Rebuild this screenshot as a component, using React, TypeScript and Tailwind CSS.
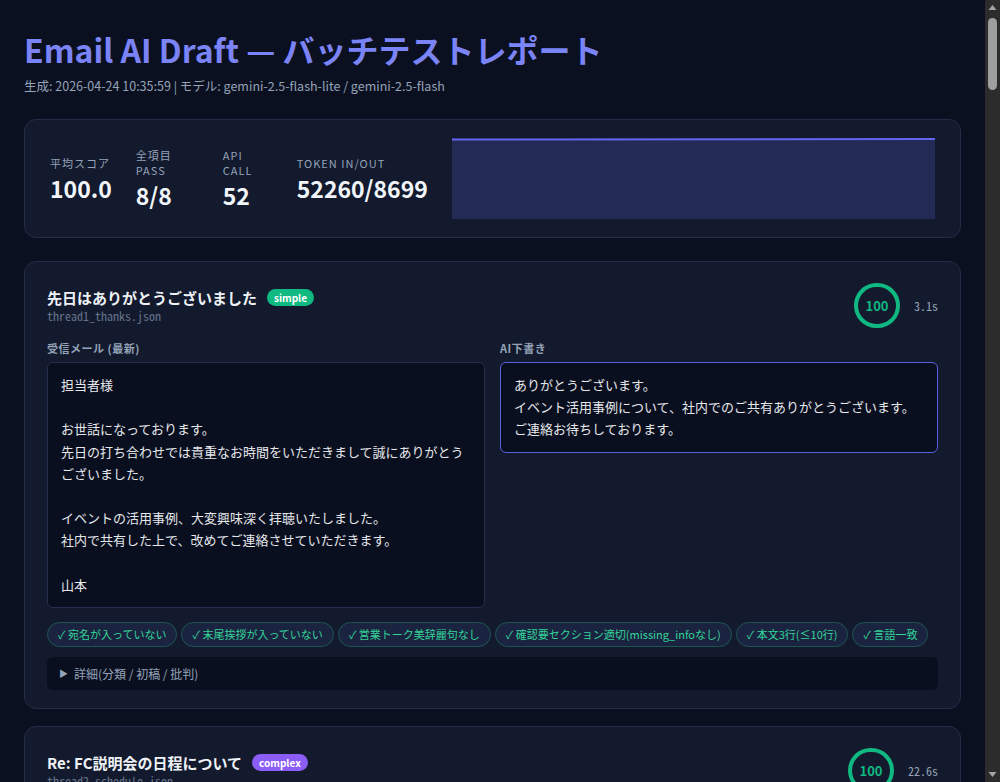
import React from 'react';

const sans = { fontFamily: '"Noto Sans CJK JP", "Noto Sans", sans-serif' };
const mono = { fontFamily: '"Noto Sans Mono CJK JP", "DejaVu Sans Mono", monospace' };

interface Case {
  title: string;
  kind: 'simple' | 'complex';
  file: string;
  score: number;
  time: string;
  inbound: string;
  draft: string;
  checks: string[];
}

const cases: Case[] = [
  {
    title: '先日はありがとうございました',
    kind: 'simple',
    file: 'thread1_thanks.json',
    score: 100,
    time: '3.1s',
    inbound:
      '担当者様\n\nお世話になっております。\n先日の打ち合わせでは貴重なお時間をいただきまして誠にありがとうございました。\n\nイベントの活用事例、大変興味深く拝聴いたしました。\n社内で共有した上で、改めてご連絡させていただきます。\n\n山本',
    draft: 'ありがとうございます。\nイベント活用事例について、社内でのご共有ありがとうございます。\nご連絡お待ちしております。',
    checks: ['宛名が入っていない', '末尾挨拶が入っていない', '営業トーク美辞麗句なし', '確認要セクション適切(missing_infoなし)', '本文3行(≤10行)', '言語一致'],
  },
  {
    title: 'Re: FC説明会の日程について',
    kind: 'complex',
    file: 'thread2_schedule.json',
    score: 100,
    time: '22.6s',
    inbound:
      'ご担当者様\n\nお世話になっております。\nFC説明会の日程につきまして、来週の火曜日または木曜日の午後で調整可能でしょうか。\n参加人数は3名を予定しております。\n\n何卒よろしくお願いいたします。\n\n佐藤',
    draft: 'ご連絡ありがとうございます。\n来週火曜日・木曜日の午後、いずれも調整可能です。\n参加人数3名にて承知いたしました。\n\n【確認要】\n・開始時刻のご希望',
    checks: ['宛名が入っていない', '末尾挨拶が入っていない', '営業トーク美辞麗句なし', '確認要セクション適切', '本文5行(≤10行)', '言語一致'],
  },
];

function Stat({ label, value, w }: { label: string; value: string; w?: string }) {
  return (
    <div className={`flex flex-col shrink-0 ${w ?? ''}`}>
      <div className="text-[11px] leading-[15px] tracking-[1px] text-[#94a3b8] mb-[3px]">{label}</div>
      <div className="text-[23px] leading-[28px] font-bold text-[#f1f5f9]">{value}</div>
    </div>
  );
}

function Sparkline() {
  return (
    <svg className="block w-full h-[81px]" viewBox="0 0 482 81" preserveAspectRatio="none">
      <rect x="0" y="1" width="482" height="80" fill="#232a55" />
      <line x1="0" y1="1.5" x2="482" y2="1" stroke="#6366f1" strokeWidth="2" />
    </svg>
  );
}

function Scrollbar() {
  return (
    <div className="fixed top-0 right-0 w-[15px] h-screen bg-[#2c2c2c] flex flex-col items-center">
      <svg width="15" height="15" viewBox="0 0 15 15">
        <path d="M3.5 10 L7.5 5 L11.5 10 Z" fill="#a3a3a3" />
      </svg>
      <div className="w-[9px] h-[72px] rounded-full bg-[#9f9f9f] mt-[3px]" />
      <div className="flex-1" />
      <svg width="15" height="15" viewBox="0 0 15 15">
        <path d="M3.5 5 L7.5 10 L11.5 5 Z" fill="#a3a3a3" />
      </svg>
    </div>
  );
}

function CaseCard({ c }: { c: Case }) {
  return (
    <div className="bg-[#131a2d] border border-[#242d48] rounded-[12px] px-[22px] pt-[21px] pb-[18px]">
      <div className="flex items-center justify-between">
        <div>
          <div className="flex items-center gap-[10px]">
            <span className="text-[15px] leading-[20px] font-bold text-[#eef2f7]">{c.title}</span>
            <span
              className={`text-[10px] leading-[17px] font-bold text-white rounded-full px-[7px] ${
                c.kind === 'simple' ? 'bg-[#10b981]' : 'bg-[#8b5cf6]'
              }`}
            >
              {c.kind}
            </span>
          </div>
          <div className="text-[12px] leading-[16px] text-[#64748b]" style={mono}>
            {c.file}
          </div>
        </div>
        <div className="flex items-center gap-[14px]">
          <div className="w-[46px] h-[45px] rounded-full border-[4px] border-[#10b981] flex items-center justify-center text-[13px] font-bold text-[#10b981]">
            {c.score}
          </div>
          <span className="text-[12px] text-[#94a3b8]" style={mono}>
            {c.time}
          </span>
        </div>
      </div>

      <div className="grid grid-cols-2 gap-[15px] mt-[13px] items-start">
        <div>
          <div className="text-[11px] leading-[14px] font-bold text-[#94a3b8] mb-[7px] tracking-[0.5px]">受信メール (最新)</div>
          <div className="bg-[#0a0f1f] border border-[#252e4a] rounded-[6px] px-[13px] py-[11px] text-[13px] leading-[22.2px] text-[#e5e7eb] whitespace-pre-wrap">
            {c.inbound}
          </div>
        </div>
        <div>
          <div className="text-[11px] leading-[14px] font-bold text-[#94a3b8] mb-[7px] tracking-[0.5px]">AI下書き</div>
          <div className="bg-[#0a0f1f] border border-[#5b5fe0] rounded-[6px] px-[13px] py-[11px] text-[13px] leading-[22.2px] text-[#e5e7eb] whitespace-pre-wrap">
            {c.draft}
          </div>
        </div>
      </div>

      <div className="flex flex-wrap gap-[4px] mt-[14px]">
        {c.checks.map((ch) => (
          <span
            key={ch}
            className="text-[11px] leading-[23px] text-[#34d399] bg-[#1a2440] border border-[#1d5553] rounded-full px-[10px]"
          >
            ✓ {ch}
          </span>
        ))}
      </div>

      <div className="mt-[10px] bg-[#0a0f1f] rounded-[6px] h-[33px] flex items-center px-[12px] text-[12px] text-[#94a3b8]">
        <span className="text-[9px] mr-[6px]">▶</span>詳細(分類 / 初稿 / 批判)
      </div>
    </div>
  );
}

export default function App() {
  return (
    <div className="min-h-screen bg-[#0b1020]" style={sans}>
      <meta name="color-scheme" content="dark" />
      <div className="w-[985px] px-[24px] pt-[28px] pb-[40px]">
        <h1 className="text-[32px] leading-[42px] font-bold text-[#7b84f6]">Email AI Draft — バッチテストレポート</h1>
        <div className="text-[12.5px] leading-[18px] text-[#94a3b8] mt-[7px]">
          生成: 2026-04-24 10:35:59 | モデル: gemini-2.5-flash-lite / gemini-2.5-flash
        </div>

        <div className="mt-[24px] bg-[#131a2d] border border-[#242d48] rounded-[12px] px-[25px] py-[18px] flex items-center gap-[24px]">
          <Stat label="平均スコア" value="100.0" />
          <Stat label="全項目 PASS" value="8/8" w="w-[63px]" />
          <Stat label="API CALL" value="52" w="w-[50px]" />
          <Stat label="TOKEN IN/OUT" value="52260/8699" />
          <div className="flex-1 min-w-0">
            <Sparkline />
          </div>
        </div>

        <div className="mt-[23px] flex flex-col gap-[17px]">
          {cases.map((c) => (
            <CaseCard key={c.file} c={c} />
          ))}
        </div>
      </div>
      <Scrollbar />
    </div>
  );
}
